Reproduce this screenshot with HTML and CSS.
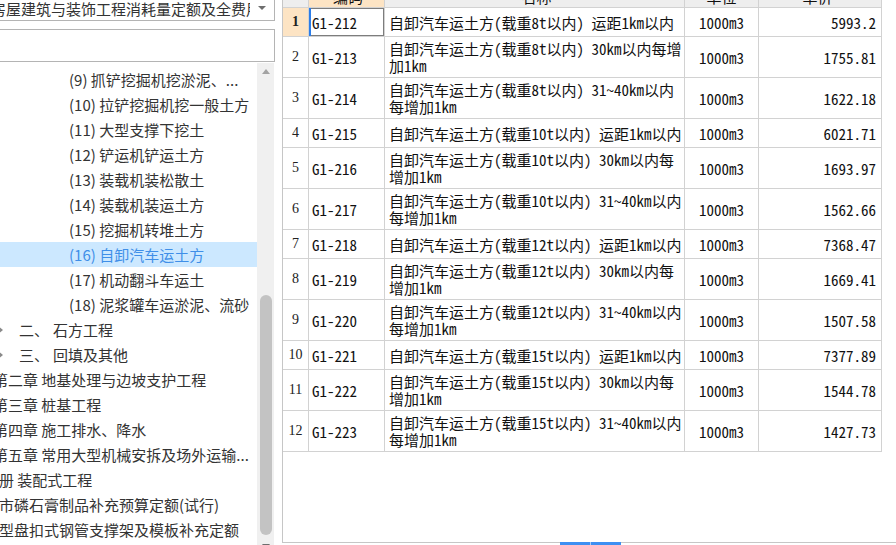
FILE: index.html
```html
<!DOCTYPE html>
<html lang="zh-CN">
<head>
<meta charset="utf-8">
<title>定额</title>
<link rel="stylesheet" href="styles.css">
</head>
<body>
<div class="app">
  <aside class="left">
    <div class="combo">
      <div class="combo-text"><span class="combo-label">房屋建筑与装饰工程消耗量定额及全费用基价表</span></div>
      <div class="combo-arrow"><span class="tri-down"></span></div>
    </div>
    <div class="search"></div>
    <div class="treewrap">
      <div class="tree">
        <div class="row l3"><span>(9) 抓铲挖掘机挖淤泥、...</span></div>
        <div class="row l3"><span>(10) 拉铲挖掘机挖一般土方</span></div>
        <div class="row l3"><span>(11) 大型支撑下挖土</span></div>
        <div class="row l3"><span>(12) 铲运机铲运土方</span></div>
        <div class="row l3"><span>(13) 装载机装松散土</span></div>
        <div class="row l3"><span>(14) 装载机装运土方</span></div>
        <div class="row l3"><span>(15) 挖掘机转堆土方</span></div>
        <div class="row l3 sel"><span>(16) 自卸汽车运土方</span></div>
        <div class="row l3"><span>(17) 机动翻斗车运土</span></div>
        <div class="row l3"><span>(18) 泥浆罐车运淤泥、流砂</span></div>
        <div class="row l2"><span class="tri-right"></span><span class="num">二、</span><span>石方工程</span></div>
        <div class="row l2"><span class="tri-right"></span><span class="num">三、</span><span>回填及其他</span></div>
        <div class="row l1"><span>第二章 地基处理与边坡支护工程</span></div>
        <div class="row l1"><span>第三章 桩基工程</span></div>
        <div class="row l1"><span>第四章 施工排水、降水</span></div>
        <div class="row l1"><span>第五章 常用大型机械安拆及场外运输...</span></div>
        <div class="row l0"><span>册 装配式工程</span></div>
        <div class="row l0"><span>市磷石膏制品补充预算定额(试行)</span></div>
        <div class="row l0"><span>型盘扣式钢管支撑架及模板补充定额</span></div>
      </div>
      <div class="vscroll">
        <div class="sb-btn"><span class="tri-up"></span></div>
        <div class="sb-track"><div class="sb-thumb"></div></div>
        <div class="sb-btn"><span class="tri-dn"></span></div>
      </div>
    </div>
  </aside>

  <main class="right">
    <div class="grid">
      <div class="hdr">
        <div class="c cn"></div>
        <div class="c cc hsel">编码</div>
        <div class="c cm">名称</div>
        <div class="c cu">单位</div>
        <div class="c cp">单价</div>
      </div>

      <div class="tr s">
        <div class="c cn rsel">1</div>
        <div class="c cc focus">G1-212</div>
        <div class="c cm">自卸汽车运土方(载重8t以内) 运距1km以内</div>
        <div class="c cu">1000m3</div>
        <div class="c cp">5993.2</div>
      </div>
      <div class="tr d">
        <div class="c cn">2</div>
        <div class="c cc">G1-213</div>
        <div class="c cm">自卸汽车运土方(载重8t以内) 30km以内每增<br>加1km</div>
        <div class="c cu">1000m3</div>
        <div class="c cp">1755.81</div>
      </div>
      <div class="tr d">
        <div class="c cn">3</div>
        <div class="c cc">G1-214</div>
        <div class="c cm">自卸汽车运土方(载重8t以内) 31~40km以内<br>每增加1km</div>
        <div class="c cu">1000m3</div>
        <div class="c cp">1622.18</div>
      </div>
      <div class="tr s">
        <div class="c cn">4</div>
        <div class="c cc">G1-215</div>
        <div class="c cm">自卸汽车运土方(载重10t以内) 运距1km以内</div>
        <div class="c cu">1000m3</div>
        <div class="c cp">6021.71</div>
      </div>
      <div class="tr d">
        <div class="c cn">5</div>
        <div class="c cc">G1-216</div>
        <div class="c cm">自卸汽车运土方(载重10t以内) 30km以内每<br>增加1km</div>
        <div class="c cu">1000m3</div>
        <div class="c cp">1693.97</div>
      </div>
      <div class="tr d">
        <div class="c cn">6</div>
        <div class="c cc">G1-217</div>
        <div class="c cm">自卸汽车运土方(载重10t以内) 31~40km以内<br>每增加1km</div>
        <div class="c cu">1000m3</div>
        <div class="c cp">1562.66</div>
      </div>
      <div class="tr s">
        <div class="c cn">7</div>
        <div class="c cc">G1-218</div>
        <div class="c cm">自卸汽车运土方(载重12t以内) 运距1km以内</div>
        <div class="c cu">1000m3</div>
        <div class="c cp">7368.47</div>
      </div>
      <div class="tr d">
        <div class="c cn">8</div>
        <div class="c cc">G1-219</div>
        <div class="c cm">自卸汽车运土方(载重12t以内) 30km以内每<br>增加1km</div>
        <div class="c cu">1000m3</div>
        <div class="c cp">1669.41</div>
      </div>
      <div class="tr d">
        <div class="c cn">9</div>
        <div class="c cc">G1-220</div>
        <div class="c cm">自卸汽车运土方(载重12t以内) 31~40km以内<br>每增加1km</div>
        <div class="c cu">1000m3</div>
        <div class="c cp">1507.58</div>
      </div>
      <div class="tr s">
        <div class="c cn">10</div>
        <div class="c cc">G1-221</div>
        <div class="c cm">自卸汽车运土方(载重15t以内) 运距1km以内</div>
        <div class="c cu">1000m3</div>
        <div class="c cp">7377.89</div>
      </div>
      <div class="tr d">
        <div class="c cn">11</div>
        <div class="c cc">G1-222</div>
        <div class="c cm">自卸汽车运土方(载重15t以内) 30km以内每<br>增加1km</div>
        <div class="c cu">1000m3</div>
        <div class="c cp">1544.78</div>
      </div>
      <div class="tr d">
        <div class="c cn">12</div>
        <div class="c cc">G1-223</div>
        <div class="c cm">自卸汽车运土方(载重15t以内) 31~40km以内<br>每增加1km</div>
        <div class="c cu">1000m3</div>
        <div class="c cp">1427.73</div>
      </div>
    </div>
    <div class="footer"><div class="splitter"></div></div>
  </main>
</div>
</body>
</html>
```

FILE: styles.css
```css
* { box-sizing: border-box; }
html, body {
  margin: 0;
  padding: 0;
  width: 896px;
  height: 545px;
  overflow: hidden;
  background: #ffffff;
}
body {
  font-family: "Noto Sans CJK SC", sans-serif;
  font-size: 15px;
  color: #333333;
}
.app {
  display: flex;
  width: 896px;
  height: 545px;
}

/* ---------- left panel ---------- */
.left {
  width: 275px;
  flex-shrink: 0;
  display: flex;
  flex-direction: column;
}
.left > * { flex-shrink: 0; }
.combo {
  margin-top: -1px;
  margin-left: -1px;
  width: 276px;
  height: 22px;
  border: 1px solid #b4b4b4;
  background: #fff;
  display: flex;
}
.combo-text {
  flex: 1;
  overflow: hidden;
  white-space: nowrap;
  line-height: 18px;
}
.combo-label {
  display: inline-block;
  margin-left: -9px;
  color: #333;
}
.combo-arrow {
  width: 24px;
  display: flex;
  align-items: center;
  justify-content: center;
  padding-bottom: 4px;
}
.tri-down {
  width: 0;
  height: 0;
  border-left: 4px solid transparent;
  border-right: 4px solid transparent;
  border-top: 4px solid #6e6e6e;
}
.search {
  margin-top: 8px;
  margin-left: -1px;
  width: 276px;
  height: 33px;
  border: 1px solid #b4b4b4;
  background: #fff;
}
.treewrap {
  margin-top: 1px;
  height: 492px;
  display: flex;
}
.tree {
  width: 257px;
  padding-top: 4px;
  overflow: hidden;
}
.row {
  height: 25px;
  line-height: 25px;
  white-space: nowrap;
  display: flex;
  align-items: center;
  color: #333;
}
.row.sel {
  background: #cce8ff;
  color: #3f8fe8;
}
.l3 { padding-left: 69px; }
.l2 .tri-right {
  margin-left: -2px;
  width: 0;
  height: 0;
  border-top: 4px solid transparent;
  border-bottom: 4px solid transparent;
  border-left: 5px solid #8a8a8a;
}
.l2 .num {
  margin-left: 16px;
  margin-right: 4px;
}
.l1 span { margin-left: -7px; }
.l0 span { margin-left: -1px; }

.vscroll {
  width: 17px;
  background: #f0f0f0;
  display: flex;
  flex-direction: column;
}
.sb-btn {
  height: 17px;
  flex-shrink: 0;
  display: flex;
  align-items: center;
  justify-content: center;
}
.tri-up {
  width: 0;
  height: 0;
  border-left: 4px solid transparent;
  border-right: 4px solid transparent;
  border-bottom: 5px solid #a3a3a3;
}
.tri-dn {
  width: 0;
  height: 0;
  border-left: 4px solid transparent;
  border-right: 4px solid transparent;
  border-top: 5px solid #6e6e6e;
}
.sb-track {
  flex: 1;
  display: flex;
  flex-direction: column;
  align-items: center;
}
.sb-thumb {
  margin-top: 215px;
  width: 12px;
  height: 240px;
  flex-shrink: 0;
  border-radius: 6px;
  background: #c3c3c3;
}

/* ---------- right panel ---------- */
.right {
  flex: 1;
  margin-left: 7px;
  display: flex;
  flex-direction: column;
}
.grid {
  height: 542px;
  border-left: 1px solid #c6c6c6;
  overflow: hidden;
  flex-shrink: 0;
}
.footer {
  height: 3px;
  flex-shrink: 0;
  box-shadow: inset 0 1px 0 #c6c6c6;
  display: flex;
}
.splitter {
  margin-left: 278px;
  width: 61px;
  height: 3px;
  background: linear-gradient(to right, #3d8ff2 0 30px, #a9cdf8 30px 31px, #3d8ff2 31px);
}

.hdr, .tr {
  display: flex;
  width: 599px;
  border-bottom: 1px solid #d2d2d2;
}
.hdr {
  margin-top: -19px;
  height: 27px;
  background: #eeeeee;
  font-size: 14px;
  color: #222;
}
.hdr .c {
  justify-content: center;
  padding-top: 6px;
  line-height: 20px;
}
.hdr .hsel { background: #fde4c4; }
.tr.s { height: 29px; }
.tr.d { height: 41px; }

.c {
  display: flex;
  align-items: center;
  border-right: 1px solid #d2d2d2;
  white-space: nowrap;
  overflow: hidden;
  font-family: "Noto Sans Mono CJK SC", "Noto Sans CJK SC", monospace;
  font-size: 15px;
  color: #111;
}
.cn {
  width: 26px;
  justify-content: center;
  font-family: "Liberation Serif", serif;
  font-size: 14px;
  color: #222;
}
.cn.rsel {
  background: #fde4c4;
  font-weight: bold;
}
.cc {
  width: 76px;
  padding-left: 3px;
}
.cc.focus {
  box-shadow: inset 2px 0 0 #2b7de9, inset 0 0 0 1px #7d7d7d;
}
.cm {
  width: 300px;
  padding-left: 4px;
  line-height: 17px;
}
.cu {
  width: 74px;
  justify-content: center;
}
.cp {
  width: 123px;
  justify-content: flex-end;
  padding-right: 5px;
}
```
